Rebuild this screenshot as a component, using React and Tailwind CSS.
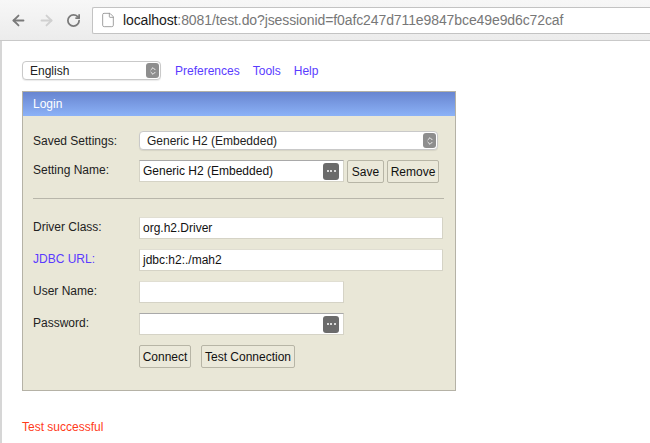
import { ArrowLeft, ArrowRight, RotateCw, File, ChevronsUpDown } from "lucide-react";

const Dots = () => (
  <div className="w-[16px] h-[17px] bg-[#6b6b6b] rounded-[3px] flex items-center justify-center gap-[1.5px]">
    <span className="w-[2px] h-[2px] bg-white rounded-full"></span>
    <span className="w-[2px] h-[2px] bg-white rounded-full"></span>
    <span className="w-[2px] h-[2px] bg-white rounded-full"></span>
  </div>
);

const Select = ({ value, className }) => (
  <div className={`flex items-center justify-between bg-white border border-[#c9c9c9] rounded-[4px] shadow-[0_1px_1px_rgba(0,0,0,0.08)] ${className}`}>
    <span className="pl-[7px] text-[12px] text-[#222]">{value}</span>
    <div className="w-[13px] h-[15px] mr-[1px] bg-[#8e8e8e] rounded-[3px] flex items-center justify-center">
      <ChevronsUpDown size={10} strokeWidth={2} className="text-white" />
    </div>
  </div>
);

const Input = ({ value, className, dots }) => (
  <div className={`flex items-center justify-between bg-white border border-[#d5d3c6] border-t-[#a9a9a9] h-[22px] ${className}`}>
    <span className="pl-[3px] text-[12px] text-[#111]">{value}</span>
    {dots && <div className="mr-[4px]"><Dots /></div>}
  </div>
);

const Button = ({ children, className }) => (
  <div className={`h-[23px] flex items-center justify-center border border-[#b7b5a6] rounded-[2px] bg-[#ebe9da] text-[12px] text-[#111] ${className}`}>
    {children}
  </div>
);

const Row = ({ label, children, labelClass, className }) => (
  <div className={`flex items-start ${className}`}>
    <div className={`w-[106px] text-[12px] pt-[1px] ${labelClass ? labelClass : "text-[#222]"}`}>{label}</div>
    {children}
  </div>
);

export default function App() {
  return (
    <div className="w-[650px] h-[443px] bg-white overflow-hidden font-['Liberation_Sans',Arial,sans-serif]">
      {/* Browser bar */}
      <div className="h-[41px] bg-gradient-to-b from-[#f7f7f7] to-[#ececec] border-b border-[#c9c9c9] flex items-center">
        <div className="flex items-center pl-[10px] gap-[11px] w-[92px]">
          <ArrowLeft size={17} strokeWidth={2.6} className="text-[#7a7a7a]" />
          <ArrowRight size={17} strokeWidth={2.6} className="text-[#d0d0d0]" />
          <RotateCw size={15} strokeWidth={2.8} className="text-[#7a7a7a]" />
        </div>
        <div className="flex-1 h-[27px] bg-white border border-[#c3c3c3] border-r-0 rounded-l-[2px] flex items-center pl-[7px]">
          <File size={16} strokeWidth={1.2} className="text-[#8a8a8a]" />
          <span className="ml-[7px] text-[14px] tracking-[-0.1px]">
            <span className="text-[#1a1a1a]">localhost</span>
            <span className="text-[#777]">:8081/test.do?jsessionid=f0afc247d711e9847bce49e9d6c72caf</span>
          </span>
        </div>
      </div>

      {/* Page */}
      <div className="h-[402px] border-l-2 border-[#d6d6d6] pl-[20px] pt-[20px]">
        <div className="flex items-center">
          <Select value="English" className="w-[139px] h-[19px]" />
          <span className="ml-[14px] text-[12px] text-[#5a3bff]">Preferences</span>
          <span className="ml-[13px] text-[12px] text-[#5a3bff]">Tools</span>
          <span className="ml-[13px] text-[12px] text-[#5a3bff]">Help</span>
        </div>

        <div className="mt-[11px] w-[434px] border border-[#b5b2a6] bg-[#e9e7d7]">
          <div className="h-[24px] bg-gradient-to-b from-[#6885d0] to-[#8cb2f7] flex items-center pl-[10px] text-[12px] text-white">
            Login
          </div>
          <div className="px-[10px] pt-[15px] pb-[22px]">
            <Row label="Saved Settings:">
              <Select value="Generic H2 (Embedded)" className="w-[299px] h-[19px]" />
            </Row>
            <Row label="Setting Name:" className="mt-[10px]">
              <Input value="Generic H2 (Embedded)" className="w-[205px]" dots />
              <Button className="ml-[3px] w-[37px]">Save</Button>
              <Button className="ml-[3px] w-[52px]">Remove</Button>
            </Row>
            <div className="mt-[15px] mb-[18px] border-t border-[#b8b6aa] mr-[1px]"></div>
            <Row label="Driver Class:">
              <Input value="org.h2.Driver" className="w-[304px] border-t-[#e0ded2]" />
            </Row>
            <Row label="JDBC URL:" labelClass="text-[#5a3bff]" className="mt-[10px]">
              <Input value="jdbc:h2:./mah2" className="w-[304px] border-t-[#e0ded2]" />
            </Row>
            <Row label="User Name:" className="mt-[10px]">
              <Input value="" className="w-[205px] border-t-[#e0ded2]" />
            </Row>
            <Row label="Password:" className="mt-[10px]">
              <Input value="" className="w-[205px]" dots />
            </Row>
            <div className="mt-[10px] pl-[106px] flex">
              <Button className="w-[52px]">Connect</Button>
              <Button className="ml-[10px] w-[94px]">Test Connection</Button>
            </div>
          </div>
        </div>

        <div className="mt-[27px] text-[12px] text-[#ff3a1a]">Test successful</div>
      </div>
    </div>
  );
}
